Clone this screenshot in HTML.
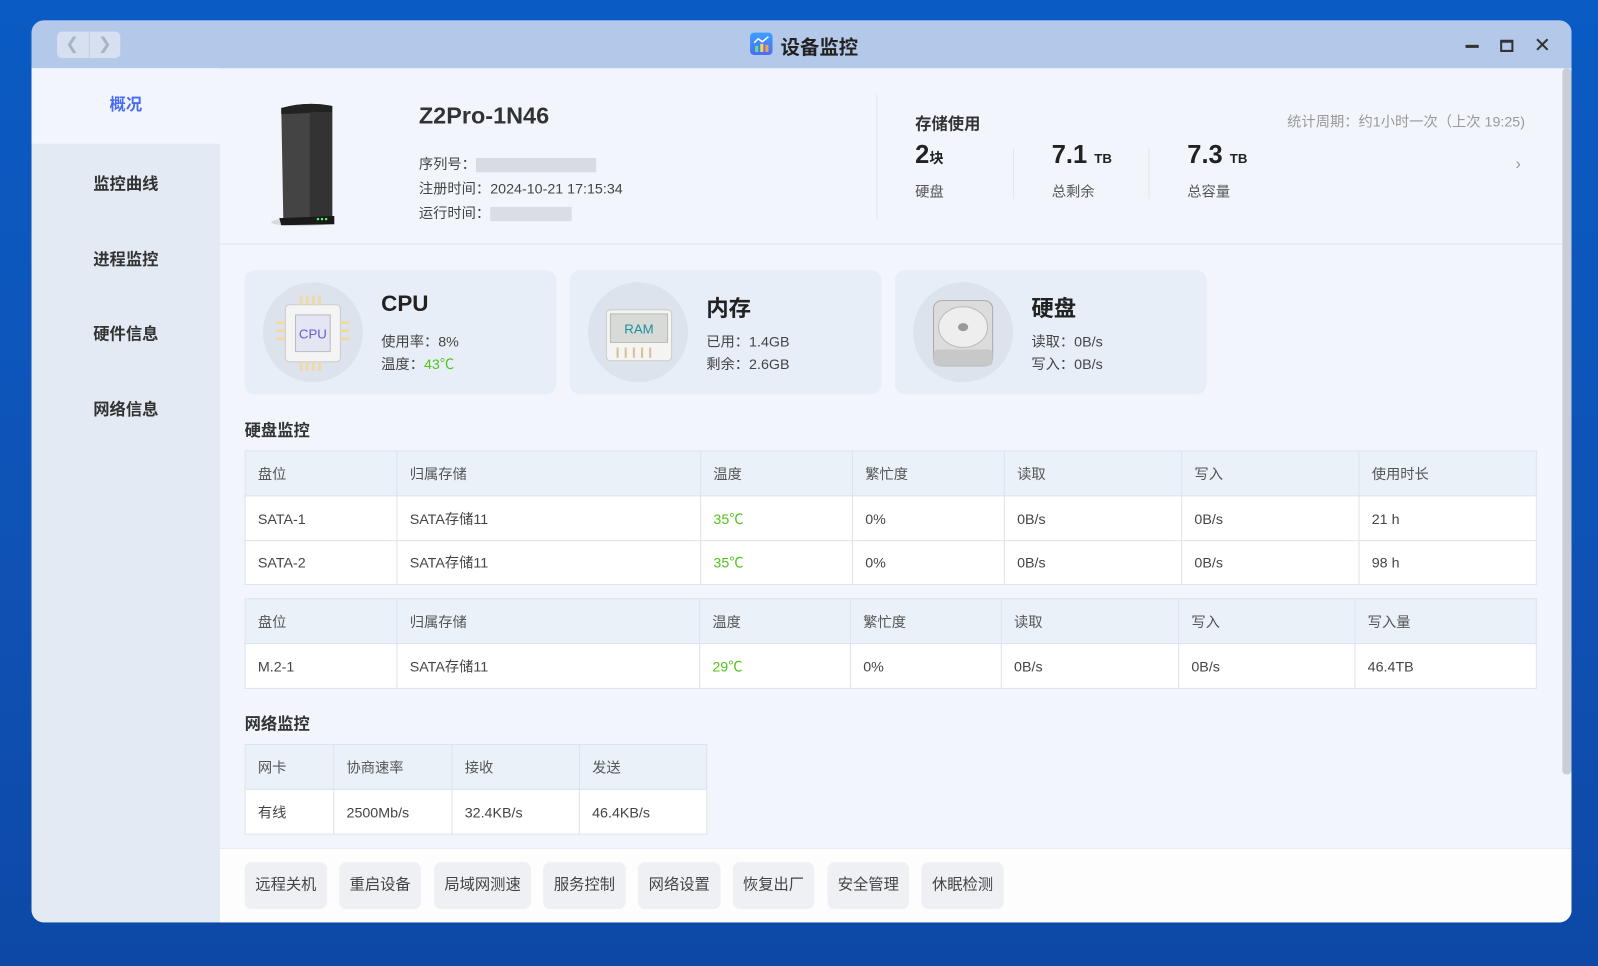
<!DOCTYPE html>
<html><head><meta charset="utf-8"><style>
*{box-sizing:border-box;margin:0;padding:0}
html,body{width:1598px;height:966px;overflow:hidden}
body{background:linear-gradient(180deg,#0a5bc4 0%,#0f52b4 60%,#0d48a6 100%);font-family:"Liberation Sans","Noto Sans CJK SC",sans-serif;color:#333}
#s{position:absolute;left:0;top:0;width:1568px;height:948px;transform:scale(1.01913);transform-origin:0 0}
.win{position:absolute;left:31px;top:20px;width:1511px;height:885px;border-radius:12px;overflow:hidden;background:#f2f6fc}
.title{position:absolute;left:0;top:0;width:100%;height:47px;background:#b4c9ea}
.side{position:absolute;left:0;top:47px;width:185px;height:838px;background:#e4eaf4}
.side div{position:absolute;left:0;width:185px;text-align:center;font-size:16px;color:#333;font-weight:bold}
.abs{position:absolute}
table{position:absolute;border-collapse:collapse;font-size:14px;color:#444}
td{border:1px solid #dde3ec;padding-left:12px;background:#fff}
tr.h td{background:#ebf1f9;color:#555}
.g{color:#52c41a}
.card{position:absolute;top:265px;width:306px;height:122px;background:#e8eef8;border-radius:10px}
.ic{position:absolute;left:18px;top:12px;width:98px;height:98px;border-radius:49px;background:#dce3ed}
.card h3{position:absolute;left:134px;top:20px;font-size:22px;color:#222}
.card p{position:absolute;left:134px;font-size:14px;color:#444}
.btn{position:absolute;top:846px;height:46px;background:#eef0f4;border-radius:7px;font-size:15px;color:#444;text-align:center;line-height:46px}
</style></head><body><div id="s">
<div class="win">
<div class="title"></div>
<div class="abs" style="left:25px;top:11px;width:62px;height:26px;background:#d6e0f0;border-radius:5px;color:#a8b4c6;font-size:16px;line-height:26px"><span style="position:absolute;left:8px">&#10094;</span><span style="position:absolute;left:31px;top:0;height:26px;border-left:1px solid #c2cde0"></span><span style="position:absolute;left:40px">&#10095;</span></div>
<div class="abs" style="left:705px;top:12px;width:22px;height:22px;border-radius:4px;background:linear-gradient(#3aa0ff,#4a6cf5)"><svg width="22" height="22"><polyline points="4,10 8,6 12,9 18,4" fill="none" stroke="#fff" stroke-width="1.5"/><rect x="5" y="13" width="3" height="6" fill="#5ce08a"/><rect x="10" y="11" width="3" height="8" fill="#ffd04a"/><rect x="15" y="12" width="3" height="7" fill="#ff9c4a"/></svg></div>
<div class="abs" style="left:735px;top:12px;font-size:19px;font-weight:bold;color:#222">设备监控</div>
<div class="abs" style="left:1407px;top:24px;width:13px;height:3px;background:#333"></div>
<div class="abs" style="left:1441px;top:19px;width:13px;height:12px;border:2px solid #333;border-top-width:3px"></div>
<div class="abs" style="left:1474px;top:12px;font-size:20px;color:#333">✕</div>
<div class="side">
<div style="top:0;height:74px;background:#f2f6fc;line-height:74px;color:#4a6cf5">概况</div>
<div style="top:100px">监控曲线</div>
<div style="top:174px">进程监控</div>
<div style="top:247px">硬件信息</div>
<div style="top:321px">网络信息</div>
</div>
<div class="abs" style="left:185px;top:219px;width:1317px;height:1px;background:#dfe5ee"></div>
<div class="abs" style="left:1502px;top:47px;width:9px;height:693px;background:#c9ced6;border-radius:4px"></div>
<svg class="abs" style="left:215px;top:76px" width="110" height="130"><ellipse cx="50" cy="122" rx="30" ry="4" fill="#bbb" opacity=".5"/><path d="M30 10 Q55 3 80 8 L80 118 L32 120 Z" fill="#444"/><path d="M30 10 Q55 3 80 8 L80 14 L30 16Z" fill="#222"/><rect x="58" y="14" width="22" height="104" fill="#333"/><path d="M28 118 L82 116 L82 124 L30 125Z" fill="#1a1a1a"/><circle cx="66" cy="119" r="1.2" fill="#5f5"/><circle cx="70" cy="119" r="1.2" fill="#5f5"/><circle cx="74" cy="119" r="1.2" fill="#5f5"/></svg>
<div class="abs" style="left:380px;top:80px;font-size:23px;font-weight:bold;color:#333">Z2Pro-1N46</div>
<div class="abs" style="left:380px;top:129px;font-size:14px;color:#444;line-height:24px">序列号：<span style="display:inline-block;width:118px;height:14px;background:#d8dbe2;vertical-align:middle"></span><br>注册时间：2024-10-21 17:15:34<br>运行时间：<span style="display:inline-block;width:80px;height:14px;background:#dadde3;vertical-align:middle"></span></div>
<div class="abs" style="left:829px;top:73px;width:1px;height:122px;background:#dfe3ea"></div>
<div class="abs" style="left:867px;top:88px;font-size:16px;font-weight:bold;color:#333">存储使用</div>
<div class="abs" style="left:1232px;top:89px;font-size:14px;color:#999">统计周期：约1小时一次（上次 19:25)</div>
<div class="abs" style="left:867px;top:118px;font-size:25px;font-weight:bold;color:#222">2<span style="font-size:14px">块</span></div>
<div class="abs" style="left:1001px;top:118px;font-size:25px;font-weight:bold;color:#222">7.1 <span style="font-size:13px">TB</span></div>
<div class="abs" style="left:1134px;top:118px;font-size:25px;font-weight:bold;color:#222">7.3 <span style="font-size:13px">TB</span></div>
<div class="abs" style="left:867px;top:158px;font-size:14px;color:#555">硬盘</div>
<div class="abs" style="left:1001px;top:158px;font-size:14px;color:#555">总剩余</div>
<div class="abs" style="left:1134px;top:158px;font-size:14px;color:#555">总容量</div>
<div class="abs" style="left:963px;top:125px;width:1px;height:50px;background:#e3e6ec"></div>
<div class="abs" style="left:1096px;top:125px;width:1px;height:50px;background:#e3e6ec"></div>
<div class="abs" style="left:1456px;top:133px;font-size:16px;color:#999">›</div>
</div>
<div class="card" style="left:240px"><div class="ic"><svg width="98" height="98"><rect x="22" y="22" width="54" height="56" rx="4" fill="#f4f4f4" stroke="#ccc"/><rect x="32" y="32" width="34" height="36" fill="#e4e6f4" stroke="#bbb"/><text x="49" y="55" font-size="13" text-anchor="middle" fill="#6a5acd" font-family="Liberation Sans">CPU</text><g fill="#f0d9a8"><rect x="36" y="13" width="3" height="9"/><rect x="42" y="13" width="3" height="9"/><rect x="48" y="13" width="3" height="9"/><rect x="54" y="13" width="3" height="9"/><rect x="36" y="78" width="3" height="9"/><rect x="42" y="78" width="3" height="9"/><rect x="48" y="78" width="3" height="9"/><rect x="54" y="78" width="3" height="9"/><rect x="13" y="38" width="9" height="3"/><rect x="13" y="46" width="9" height="3"/><rect x="13" y="54" width="9" height="3"/><rect x="76" y="38" width="9" height="3"/><rect x="76" y="46" width="9" height="3"/><rect x="76" y="54" width="9" height="3"/></g></svg></div><h3>CPU</h3><p style="top:60px">使用率：8%</p><p style="top:82px">温度：<span class="g">43℃</span></p></div>
<div class="card" style="left:559px"><div class="ic"><svg width="98" height="98"><rect x="18" y="27" width="64" height="50" rx="4" fill="#f4f4f2" stroke="#ccc"/><rect x="22" y="31" width="56" height="28" fill="#d8dad8" stroke="#bbb"/><text x="50" y="50" font-size="13" text-anchor="middle" fill="#1a8fa0" font-family="Liberation Sans">RAM</text><g fill="#d9c090"><rect x="28" y="64" width="2" height="10"/><rect x="36" y="64" width="2" height="10"/><rect x="44" y="64" width="2" height="10"/><rect x="52" y="64" width="2" height="10"/><rect x="60" y="64" width="2" height="10"/></g></svg></div><h3>内存</h3><p style="top:60px">已用：1.4GB</p><p style="top:82px">剩余：2.6GB</p></div>
<div class="card" style="left:878px"><div class="ic"><svg width="98" height="98"><rect x="20" y="18" width="58" height="64" rx="8" fill="#dcdcdc" stroke="#aaa"/><ellipse cx="49" cy="44" rx="24" ry="20" fill="#eee" stroke="#bbb"/><ellipse cx="49" cy="44" rx="5" ry="4" fill="#999"/><rect x="20" y="66" width="58" height="16" rx="4" fill="#c8c8c8"/></svg></div><h3>硬盘</h3><p style="top:60px">读取：0B/s</p><p style="top:82px">写入：0B/s</p></div>
<div class="abs" style="left:240px;top:409px;font-size:16px;font-weight:bold;color:#333">硬盘监控</div>
<table style="left:240px;top:442px;width:1268px">
<tr class="h" style="height:44px"><td style="width:149px">盘位</td><td style="width:298px">归属存储</td><td style="width:149px">温度</td><td style="width:149px">繁忙度</td><td style="width:174px">读取</td><td style="width:174px">写入</td><td>使用时长</td></tr>
<tr style="height:44px"><td>SATA-1</td><td>SATA存储11</td><td class="g">35℃</td><td>0%</td><td>0B/s</td><td>0B/s</td><td>21 h</td></tr>
<tr style="height:43px"><td>SATA-2</td><td>SATA存储11</td><td class="g">35℃</td><td>0%</td><td>0B/s</td><td>0B/s</td><td>98 h</td></tr>
</table>
<table style="left:240px;top:587px;width:1268px">
<tr class="h" style="height:44px"><td style="width:149px">盘位</td><td style="width:297px">归属存储</td><td style="width:148px">温度</td><td style="width:148px">繁忙度</td><td style="width:174px">读取</td><td style="width:173px">写入</td><td>写入量</td></tr>
<tr style="height:44px"><td>M.2-1</td><td>SATA存储11</td><td class="g">29℃</td><td>0%</td><td>0B/s</td><td>0B/s</td><td>46.4TB</td></tr>
</table>
<div class="abs" style="left:240px;top:697px;font-size:16px;font-weight:bold;color:#333">网络监控</div>
<table style="left:240px;top:730px;width:454px">
<tr class="h" style="height:44px"><td style="width:87px">网卡</td><td style="width:116px">协商速率</td><td style="width:125px">接收</td><td>发送</td></tr>
<tr style="height:44px"><td>有线</td><td>2500Mb/s</td><td>32.4KB/s</td><td>46.4KB/s</td></tr>
</table>
<div class="abs" style="left:216px;top:832px;width:1326px;height:73px;background:#fdfdfe;border-top:1px solid #e3e7ee;border-bottom-right-radius:12px"></div>
<div class="btn" style="left:240px;width:81px">远程关机</div>
<div class="btn" style="left:333px;width:80px">重启设备</div>
<div class="btn" style="left:426px;width:95px">局域网测速</div>
<div class="btn" style="left:533px;width:81px">服务控制</div>
<div class="btn" style="left:626px;width:81px">网络设置</div>
<div class="btn" style="left:719px;width:80px">恢复出厂</div>
<div class="btn" style="left:812px;width:80px">安全管理</div>
<div class="btn" style="left:904px;width:81px">休眠检测</div>
</div></body></html>
